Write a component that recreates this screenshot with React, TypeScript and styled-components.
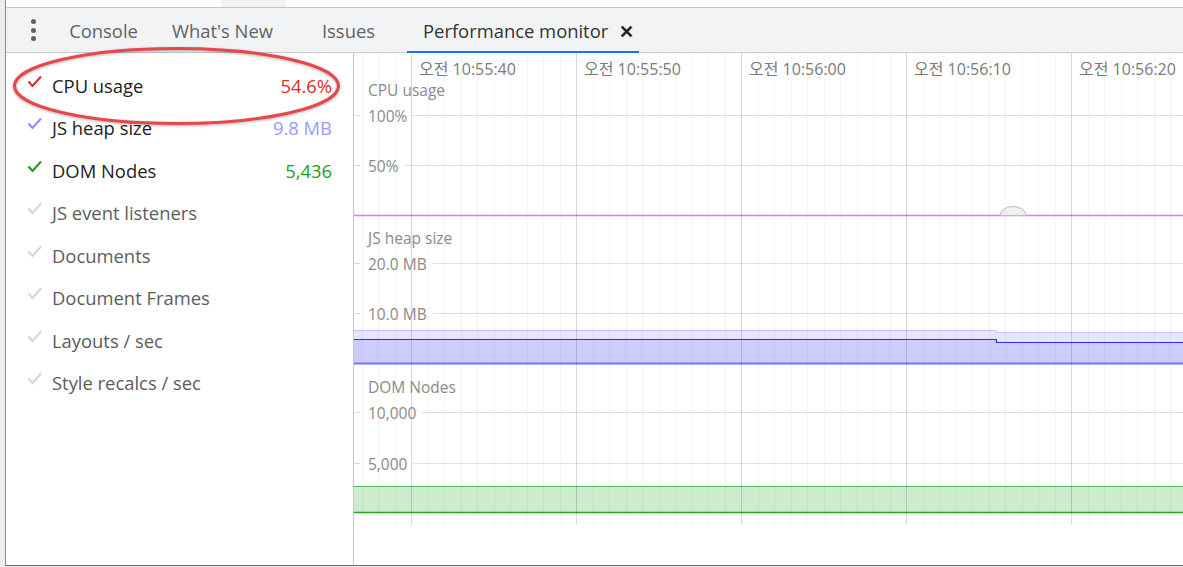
import styled, { createGlobalStyle } from "styled-components";

const GlobalStyle = createGlobalStyle`
  html, body {
    margin: 0;
    padding: 0;
    background: #e9e9e9;
  }
  body {
    font-family: "Open Sans", "Noto Sans CJK KR", sans-serif;
  }
`;

const Page = styled.div`
  display: flex;
  width: 1183px;
  height: 567px;
  overflow: hidden;
  background: #e9e9e9;
`;
const Gutter = styled.div`
  width: 5px;
  background: #ededed;
`;
const Window = styled.div`
  position: relative;
  flex: 1;
  height: 566px;
  box-sizing: border-box;
  display: flex;
  flex-direction: column;
  background: #fff;
  border-left: 1px solid #8c8c8c;
  border-bottom: 1px solid #6e6e6e;
`;
const TopStrip = styled.div`
  height: 7px;
  padding-left: 215px;
  border-bottom: 1px solid #c6c6c6;
  display: flex;
`;
const Stub = styled.div`
  width: 65px;
  background: #f1f3f4;
`;
const TabBar = styled.div`
  height: 45px;
  box-sizing: border-box;
  display: flex;
  align-items: stretch;
  background: #f1f3f4;
  border-bottom: 1px solid #cbcdd1;
`;
const Kebab = styled.div`
  width: 46px;
  box-sizing: border-box;
  padding-left: 25px;
  display: flex;
  flex-direction: column;
  justify-content: center;
  gap: 3.5px;
  span {
    width: 5px;
    height: 5px;
    border-radius: 50%;
    background: #5f6368;
  }
`;
const Tab = styled.div<{ $active?: boolean; $width?: number }>`
  display: flex;
  align-items: center;
  justify-content: center;
  gap: 11px;
  padding: ${(p) => (p.$width ? "0" : "0 5px 0 16px")};
  width: ${(p) => (p.$width ? `${p.$width}px` : "auto")};
  box-sizing: border-box;
  margin-bottom: -1px;
  font-size: 18.4px;
  color: ${(p) => (p.$active ? "#333" : "#5f6368")};
  box-shadow: ${(p) => (p.$active ? "inset 0 -2px 0 #1a73e8" : "none")};
  white-space: nowrap;
`;
const Close = styled.span`
  font-size: 18px;
  font-weight: 700;
  color: #222;
  line-height: 1;
`;
const Body = styled.div`
  flex: 1;
  display: flex;
  min-height: 0;
`;
const MetricList = styled.div`
  width: 347px;
  border-right: 1px solid #c8c8c8;
  padding-top: 11px;
  display: flex;
  flex-direction: column;
`;
const Row = styled.div<{ $on: boolean }>`
  height: 42.5px;
  display: flex;
  align-items: center;
  padding: 0 21px;
  font-size: 18.4px;
  color: ${(p) => (p.$on ? "#222" : "#5c5c5c")};
`;
const Check = styled.svg`
  width: 15px;
  height: 13px;
  margin-right: 10px;
  margin-top: -8px;
  flex-shrink: 0;
`;
const Label = styled.span`
  flex: 1;
`;
const Value = styled.span<{ $color: string }>`
  color: ${(p) => p.$color};
`;
const ChartPane = styled.div`
  flex: 1;
  overflow: hidden;
  svg {
    display: block;
  }
`;
const Annotation = styled.svg`
  position: absolute;
  left: 0;
  top: 0;
  width: 360px;
  height: 140px;
  pointer-events: none;
  filter: drop-shadow(0 1px 1.5px rgba(0, 0, 0, 0.3));
`;

interface Metric {
  name: string;
  on: boolean;
  color: string;
  value?: string;
  valueColor?: string;
}

const metrics: Metric[] = [
  { name: "CPU usage", on: true, color: "#e02828", value: "54.6%", valueColor: "#e32a2a" },
  { name: "JS heap size", on: true, color: "#8c8cff", value: "9.8 MB", valueColor: "#9999ff" },
  { name: "DOM Nodes", on: true, color: "#1a9c1a", value: "5,436", valueColor: "#1f9f1f" },
  { name: "JS event listeners", on: false, color: "#d4d4d4" },
  { name: "Documents", on: false, color: "#d4d4d4" },
  { name: "Document Frames", on: false, color: "#d4d4d4" },
  { name: "Layouts / sec", on: false, color: "#d4d4d4" },
  { name: "Style recalcs / sec", on: false, color: "#d4d4d4" },
];

const W = 829;
const majors = [57, 222, 387, 552, 717];
const times = ["10:55:40", "10:55:50", "10:56:00", "10:56:10", "10:56:20"];

// label center y, grid lines [y, label, line start x]
const charts = [
  { title: "CPU usage", y: 37, grid: [[62, "100%", 59], [112, "50%", 51]] },
  { title: "JS heap size", y: 185, grid: [[210, "20.0 MB", 79], [260, "10.0 MB", 79]] },
  { title: "DOM Nodes", y: 334, grid: [[359, "10,000", 68], [410, "5,000", 59]] },
] as const;

function Graph() {
  const minors: number[] = [];
  for (let x = 57 - 16.5 * 3; x < W; x += 16.5) {
    if (!majors.some((m) => Math.abs(m - x) < 1)) minors.push(x);
  }
  return (
    <svg width={W} height={512} viewBox={`0 0 ${W} 512`}>
      {/* CPU */}
      <line x1={0} x2={W} y1={162.5} y2={162.5} stroke="#dc80e0" strokeWidth={1.3} />
      <path d="M646 162.5 A13 9 0 0 1 672 162.5 Z" fill="#f0f0f0" stroke="#bdbdbd" strokeWidth={1} />
      {/* JS heap */}
      <path d="M0 277.5 H642 V279.5 H829 V289 H642 V286 H0 Z" fill="#e6e6ff" />
      <path d="M0 277.5 H642 V279.5 H829" fill="none" stroke="#c2c2ff" strokeWidth={1} />
      <path d="M0 286 H642 V289 H829 V310 H0 Z" fill="#ccccff" />
      <path d="M0 286.5 H642.5 V289.5 H829" fill="none" stroke="#2f2fe8" strokeWidth={1.2} />
      <line x1={0} x2={W} y1={310.5} y2={310.5} stroke="#7474ff" strokeWidth={2} />
      {/* DOM */}
      <rect x={0} y={433} width={W} height={26} fill="#cdebcf" />
      <line x1={0} x2={W} y1={433.5} y2={433.5} stroke="#55bb55" strokeWidth={1} />
      <line x1={0} x2={W} y1={459.5} y2={459.5} stroke="#22a822" strokeWidth={1.4} />

      {charts.map((c) =>
        c.grid.map(([y, , start]) => (
          <g key={`${c.title}-${y}`}>
            <line x1={0} x2={6} y1={y + 0.5} y2={y + 0.5} stroke="#d6d6d6" />
            <line x1={start} x2={W} y1={y + 0.5} y2={y + 0.5} stroke="#dedede" />
          </g>
        ))
      )}
      {minors.map((x) => (
        <line key={x} x1={Math.round(x) + 0.5} x2={Math.round(x) + 0.5} y1={0} y2={472} stroke="rgba(0,0,0,0.035)" />
      ))}
      {majors.map((x) => (
        <line key={x} x1={x + 0.5} x2={x + 0.5} y1={0} y2={472} stroke="rgba(0,0,0,0.15)" />
      ))}
      <g fontFamily='"Open Sans", "Noto Sans CJK KR", sans-serif' fill="#7a7a7a" fontSize={16}>
        {majors.map((x, i) => (
          <text key={x} x={x + 8} y={22}>
            오전 {times[i]}
          </text>
        ))}
      </g>
      <g fontFamily='"Open Sans", sans-serif' fill="#8a8a8a" fontSize={15.5} dominantBaseline="central">
        {charts.map((c) => (
          <g key={c.title}>
            <text x={14} y={c.y}>
              {c.title}
            </text>
            {c.grid.map(([y, label]) => (
              <text key={label} x={14} y={y + 0.5}>
                {label}
              </text>
            ))}
          </g>
        ))}
      </g>
    </svg>
  );
}

function App() {
  return (
    <>
      <GlobalStyle />
      <Page>
        <Gutter />
        <Window>
          <TopStrip>
            <Stub />
          </TopStrip>
          <TabBar>
            <Kebab>
              <span />
              <span />
              <span />
            </Kebab>
            <Tab $width={103}>Console</Tab>
            <Tab $width={135}>What's New</Tab>
            <Tab $width={117}>Issues</Tab>
            <Tab $active>
              Performance monitor
              <Close>✕</Close>
            </Tab>
          </TabBar>
          <Body>
            <MetricList>
              {metrics.map((m) => (
                <Row key={m.name} $on={m.on}>
                  <Check viewBox="0 0 15 13">
                    <path d="M1.5 6.5 L5.5 11 L14 1.5" fill="none" stroke={m.color} strokeWidth={2} />
                  </Check>
                  <Label>{m.name}</Label>
                  {m.value && <Value $color={m.valueColor!}>{m.value}</Value>}
                </Row>
              ))}
            </MetricList>
            <ChartPane>
              <Graph />
            </ChartPane>
          </Body>
          <Annotation viewBox="0 0 360 140">
            <ellipse cx={170.5} cy={86} rx={162} ry={37.5} fill="none" stroke="#e8464a" strokeWidth={3} />
          </Annotation>
        </Window>
      </Page>
    </>
  );
}

export default App;
